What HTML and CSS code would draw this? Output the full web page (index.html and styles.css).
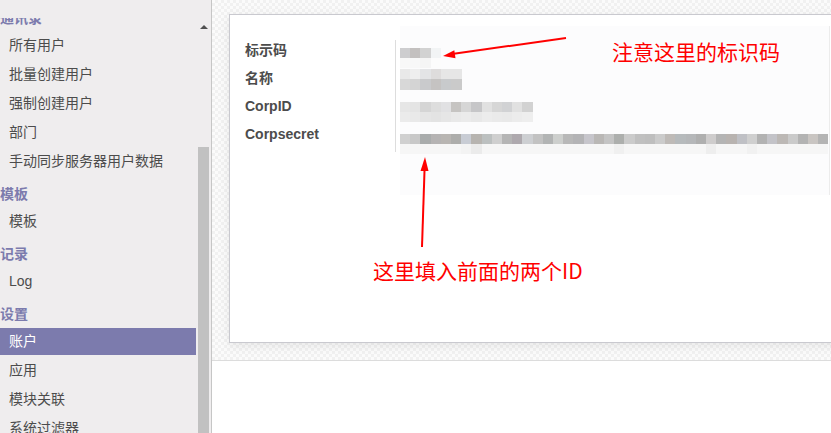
FILE: index.html
```html
<!DOCTYPE html>
<html lang="zh-CN">
<head>
<meta charset="utf-8">
<title>账户</title>
<link rel="stylesheet" href="styles.css">
</head>
<body>
<aside class="sidebar">
  <nav class="nav">
    <ul class="menu">
      <li class="section">通讯录</li>
      <li class="item">所有用户</li>
      <li class="item">批量创建用户</li>
      <li class="item">强制创建用户</li>
      <li class="item">部门</li>
      <li class="item">手动同步服务器用户数据</li>
      <li class="section">模板</li>
      <li class="item">模板</li>
      <li class="section">记录</li>
      <li class="item">Log</li>
      <li class="section">设置</li>
      <li class="item active">账户</li>
      <li class="item">应用</li>
      <li class="item">模块关联</li>
      <li class="item">系统过滤器</li>
    </ul>
  </nav>
  <div class="scrollbar">
    <div class="scroll-btn"><span class="tri"></span></div>
    <div class="scroll-track"></div>
    <div class="scroll-thumb"></div>
  </div>
</aside>
<main class="main">
  <div class="sheet-bg">
    <div class="card">
      <div class="labels">
        <div class="label">标示码</div>
        <div class="label">名称</div>
        <div class="label">CorpID</div>
        <div class="label">Corpsecret</div>
      </div>
      <div class="sep"></div>
      <div class="panel">
        <div class="blur v1a"></div>
        <div class="blur v1b"></div>
        <div class="blur v2a gap1"></div>
        <div class="blur v2b"></div>
        <div class="blur v3a gap2"></div>
        <div class="blur v3b"></div>
        <div class="blur v4a gap2"></div>
        <div class="blur v4b"></div>
      </div>
    </div>
  </div>
  <div class="bottom"></div>
</main>
<svg class="annot-svg" width="831" height="433" viewBox="0 0 831 433">
  <line x1="566" y1="38" x2="452" y2="54" stroke="#ff0000" stroke-width="2"/>
  <polygon points="443,56 455.5,58.2 454.3,50.3" fill="#ff0000"/>
  <line x1="422" y1="247" x2="424.6" y2="168" stroke="#ff0000" stroke-width="2"/>
  <polygon points="425,157 428.5,171.1 420.5,170.9" fill="#ff0000"/>
</svg>
<div class="note note-1">注意这里的标识码</div>
<div class="note note-2">这里填入前面的两个ID</div>
</body>
</html>
```
FILE: styles.css
```css
* { box-sizing: border-box; }
html, body { margin: 0; padding: 0; }
body {
  width: 831px;
  height: 433px;
  overflow: hidden;
  display: flex;
  font-family: "Liberation Sans", "Noto Sans CJK SC", sans-serif;
  font-size: 14px;
  color: #4c4c4c;
  background: #fff;
}

/* ---------- sidebar ---------- */
.sidebar {
  width: 212px;
  flex: none;
  display: flex;
  background: #efedee;
  border-right: 1px solid #c6c6c6;
  padding-right: 2px;
}
.nav {
  width: 198px;
  margin-top: 18px;
  overflow: hidden;
}
.menu {
  list-style: none;
  margin: -18px 0 0 0;
  padding: 0;
  display: flex;
  flex-direction: column;
}
.section {
  height: 31px;
  padding-top: 8px;
  line-height: 20px;
  color: #7c7bad;
  font-weight: bold;
  white-space: nowrap;
}
.item {
  height: 27px;
  margin: 1px 2px 1px 0;
  line-height: 27px;
  padding-left: 9px;
  white-space: nowrap;
}
.item.active {
  background: #7c7bad;
  color: #fff;
}
.scrollbar {
  width: 11px;
  display: flex;
  flex-direction: column;
  padding-top: 18px;
}
.scroll-btn {
  height: 18px;
  display: flex;
  justify-content: center;
  align-items: center;
}
.tri {
  width: 0;
  height: 0;
  border-left: 4px solid transparent;
  border-right: 4px solid transparent;
  border-bottom: 4px solid #505050;
}
.scroll-track { height: 111px; }
.scroll-thumb { flex: 1; background: #c1c1c1; }

/* ---------- main ---------- */
.main {
  flex: 1;
  display: flex;
  flex-direction: column;
  overflow: hidden;
}
.sheet-bg {
  height: 361px;
  flex: none;
  border-bottom: 1px solid #dcdcdc;
  background-color: #fbfbfb;
  background-image: conic-gradient(#f1f1f1 25%, transparent 0 50%, #f1f1f1 0 75%, transparent 0);
  background-size: 6px 6px;
  padding: 14px 0 0 17px;
  overflow: hidden;
}
.bottom { flex: 1; background: #fff; }

.card {
  width: 660px;
  height: 329px;
  background: #fff;
  border: 1px solid #c9c9cf;
  box-shadow: 0 3px 10px rgba(0, 0, 0, 0.08);
  display: flex;
  align-items: flex-start;
  padding-left: 15px;
}
.labels {
  width: 150px;
  padding-top: 21px;
  flex: none;
}
.label {
  height: 28px;
  line-height: 28px;
  font-weight: bold;
  color: #4c4c4c;
}
.sep {
  width: 1px;
  height: 112px;
  margin-top: 25px;
  background: #dddddd;
  flex: none;
}
.panel {
  width: 430px;
  height: 169px;
  margin: 11px 0 0 4px;
  padding-top: 22px;
  background: #fcfcfd;
  border-right: 1px solid #ececec;
  flex: none;
}
.blur { height: 10px; }
.gap1 { margin-top: 1px; }
.gap2 { margin-top: 12px; }

.v1a { width: 41px; background: linear-gradient(to right, #cdcdcf 0 10.2px, #c3c0bf 10.2px 20.4px, #d2d2d2 20.4px 30.6px, #f2f4f5 30.6px 41px); }
.v1b { width: 41px; background: linear-gradient(to right, #f8f8f8 0 20.4px, #f5f5f5 20.4px 30.6px, #fcfcfc 30.6px 41px); }
.v2a { width: 62px; background: linear-gradient(to right, #e9e9e9 0 10.2px, #eeeeee 10.2px 20.4px, #e3e4e6 20.4px 30.6px, #dedcdc 30.6px 40.8px, #e6e6e6 40.8px 62px); }
.v2b { width: 62px; height: 11px; background: linear-gradient(to right, #d8d8d8 0 10.2px, #d4d4d4 10.2px 20.4px, #c9cacc 20.4px 30.6px, #c5c3c2 30.6px 40.8px, #c8cacc 40.8px 51px, #cacaca 51px 62px); }
.v3a { width: 133px; background: linear-gradient(to right, #e6e6e6 0 10.2px, #e4e4e4 10.2px 20.4px, #d5d5d5 20.4px 30.6px, #dddddd 30.6px 40.8px, #e1e1e3 40.8px 51px, #c6c4c2 51px 61.2px, #d6d6d6 61.2px 71.4px, #c6c6c8 71.4px 81.6px, #e1e1e1 81.6px 91.8px, #d6d6d6 91.8px 102px, #d1d2d4 102px 112.2px, #e1e1e1 112.2px 122.4px, #d2d2d2 122.4px 133px); }
.v3b { width: 133px; background: linear-gradient(to right, #ebebeb 0 10.2px, #e9e9e9 10.2px 20.4px, #e5e5e5 20.4px 30.6px, #e3e3e3 30.6px 40.8px, #e6e6e6 40.8px 51px, #e9e9e9 51px 61.2px, #ebebeb 61.2px 71.4px, #e8e8e8 71.4px 81.6px, #ececec 81.6px 91.8px, #eaeaea 91.8px 102px, #e9e9e9 102px 112.2px, #ececec 112.2px 122.4px, #eeeeee 122.4px 133px); }
.v4a { width: 428px; background: linear-gradient(to right,
  #d0d0d0 0 10.2px, #c8c8c8 10.2px 20.4px, #a9acac 20.4px 30.6px, #b5b3b3 30.6px 40.8px,
  #b8b5b2 40.8px 51px, #adadab 51px 61.2px, #c8ccd4 61.2px 71.4px, #b7b4b0 71.4px 81.6px,
  #bcc0c0 81.6px 91.8px, #cfcfcf 91.8px 102px, #b5b5b5 102px 112.2px, #aea9ae 112.2px 122.4px,
  #cdcfd2 122.4px 132.6px, #c2c2c2 132.6px 142.8px, #b2b4b4 142.8px 153px, #cdcfcd 153px 163.2px,
  #b8b8b8 163.2px 173.4px, #b3b3b5 173.4px 183.6px, #c6c5cb 183.6px 193.8px, #b9b7b5 193.8px 204px,
  #c4c4c4 204px 214.2px, #adafad 214.2px 224.4px, #cbcbcb 224.4px 234.6px, #c0c0c0 234.6px 244.8px,
  #bebebe 244.8px 255px, #cbcbcb 255px 265.2px, #bebab7 265.2px 275.4px, #b6babc 275.4px 285.6px,
  #b5b7b9 285.6px 295.8px, #afafaf 295.8px 306px, #cecccc 306px 316.2px, #b4b4b4 316.2px 326.4px,
  #b8b3b0 326.4px 336.6px, #bfc0c5 336.6px 346.8px, #cfcfcf 346.8px 357px, #b2b2b2 357px 367.2px,
  #c3c3c8 367.2px 377.4px, #bcb8b5 377.4px 387.6px, #cacaca 387.6px 397.8px, #b3b3b3 397.8px 408px,
  #c9c5c2 408px 418.2px, #b4b4b4 418.2px 428px); }
.v4b { width: 428px; background: linear-gradient(to right,
  #f6f6f6 0 61.2px, #f3f3f3 61.2px 71.4px, #ebebeb 71.4px 81.6px, #f6f6f6 81.6px 214.2px,
  #f0f0f0 214.2px 224.4px, #f6f6f6 224.4px 306px, #eeeeee 306px 316.2px, #f6f6f6 316.2px 346.8px,
  #f1f1f1 346.8px 357px, #f6f6f6 357px 428px); }

/* ---------- annotations (overlay) ---------- */
.annot-svg {
  position: absolute;
  left: 0;
  top: 0;
  pointer-events: none;
}
.note {
  position: absolute;
  font-family: "Noto Sans CJK SC", "Liberation Sans", sans-serif;
  font-size: 21px;
  line-height: 21px;
  color: #ff0000;
  white-space: nowrap;
}
.note-1 { left: 612px; top: 41px; }
.note-2 { left: 373px; top: 260px; }
```
